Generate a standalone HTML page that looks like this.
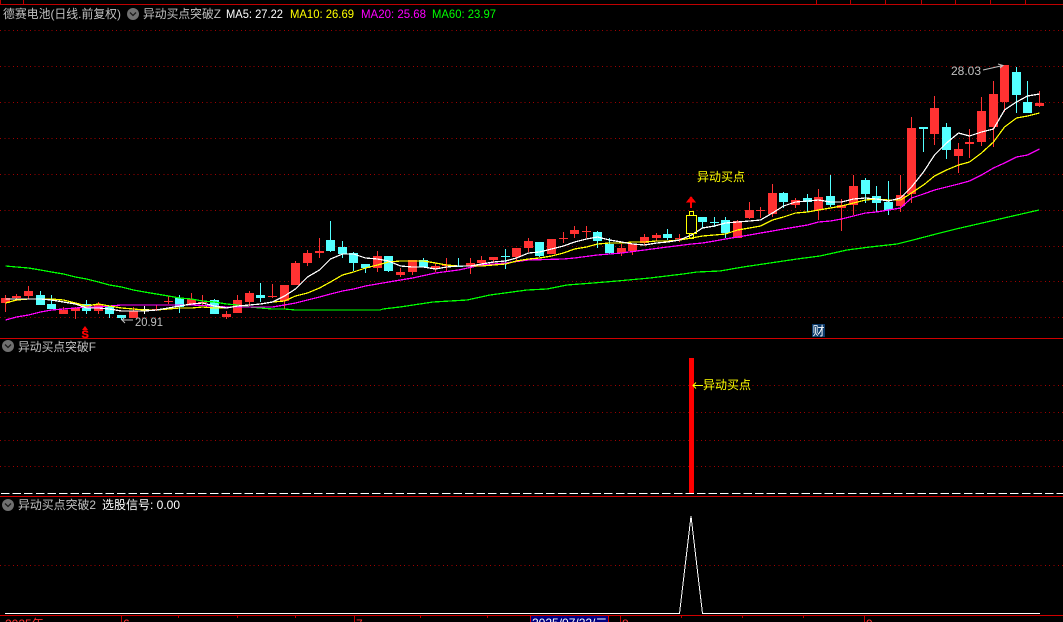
<!DOCTYPE html>
<html><head><meta charset="utf-8"><style>
html,body{margin:0;padding:0;background:#000;width:1063px;height:622px;overflow:hidden}
svg{display:block;position:absolute;left:0;top:0}
text{font:12px "Liberation Sans","WenQuanYi Zen Hei","Noto Sans CJK SC",sans-serif;white-space:pre}
.c{shape-rendering:crispEdges;fill:none}
.m{stroke-width:1.25}
</style></head><body>
<svg width="1063" height="622" viewBox="0 0 1063 622">
<!-- grid -->
<path class="c" stroke="#a00000" stroke-dasharray="1 3.3" d="M0 30.5H1063M0 66.5H1063M0 102.5H1063M0 138.5H1063M0 174.5H1063M0 210.5H1063M0 246.5H1063M0 281.5H1063M0 317.5H1063M0 385.5H1063M0 412.5H1063M0 440.5H1063M0 466.5H1063M0 565.5H1063"/>
<!-- frame -->
<path class="c" stroke="#c00000" d="M0 4.5H1063M0.5 0V4M23.5 0V4M816.5 0V4M850.5 0V4M885.5 0V4M921.5 0V4M955.5 0V4M990.5 0V4M1025.5 0V4M121.5 615V622M178.5 615V618M237.5 615V618M295.5 615V618M354.5 615V622M420.5 615V618M487.5 615V618M620.5 615V622M681.5 615V618M742.5 615V618M803.5 615V618M864.5 615V622"/>
<path class="c" stroke="#d00000" stroke-width="1" d="M0 338.5H1063M0 496.5H1063M0 615.5H1063"/>
<!-- candle wicks -->
<path class="c" stroke="#ff3232" d="M5.5 295V312M16.5 294V301M28.5 286V299M63.5 307V314M75.5 307V319M98.5 302V314M133.5 307V318M156.5 305V311M168.5 296V304M191.5 293V305M202.5 295V306M226.5 311V319M237.5 295V313M249.5 291V306M272.5 284V298M284.5 285V309M295.5 261V285M307.5 250V266M319.5 238V258M377.5 251V272M400.5 268V277M412.5 260V275M435.5 263V272M446.5 258V272M470.5 258V274M481.5 256V266M493.5 257V263M516.5 248V261M528.5 238V252M551.5 239V254M563.5 232V243M574.5 226V238M586.5 226V238M621.5 244V256M632.5 244V255M644.5 234V245M656.5 233V241M679.5 234V242M737.5 220V238M749.5 202V219M760.5 207V218M772.5 184V217M795.5 198V208M818.5 189V220M841.5 199V231M853.5 175V215M900.5 175V212M911.5 117V203M934.5 96V145M958.5 143V173M969.5 129V158M981.5 97V146M993.5 81V147M1004.5 65V112M1039.5 91V107"/>
<path class="c" stroke="#54ffff" d="M40.5 291V305M51.5 295V309M86.5 300V314M109.5 306V318M121.5 315V320M179.5 295V313M214.5 299V314M260.5 283V302M330.5 221V252M342.5 241V258M353.5 252V271M365.5 264V273M388.5 256V272M423.5 258V267M458.5 258V267M505.5 249V269M539.5 242V257M597.5 231V248M609.5 238V254M667.5 229V240M702.5 217V228M714.5 217V227M725.5 217V238M783.5 192V208M807.5 194V212M830.5 175V207M865.5 178V203M876.5 186V212M888.5 181V215M923.5 127V152M946.5 123V159M1016.5 67V113M1027.5 81V113"/>
<!-- candle bodies -->
<path shape-rendering="crispEdges" fill="#ff3232" d="M1 298h9v5h-9zM12 296h9v2h-9zM24 291h9v5h-9zM59 310h9v4h-9zM71 308h9v3h-9zM94 304h9v7h-9zM129 311h9v7h-9zM152 309h9v1h-9zM164 301h9v1h-9zM187 299h9v5h-9zM198 302h9v1h-9zM222 314h9v3h-9zM233 300h9v13h-9zM245 293h9v9h-9zM268 296h9v1h-9zM280 285h9v16h-9zM291 263h9v22h-9zM303 253h9v10h-9zM315 251h9v2h-9zM373 256h9v12h-9zM396 272h9v3h-9zM408 260h9v12h-9zM431 266h9v3h-9zM442 265h9v1h-9zM466 263h9v3h-9zM477 260h9v3h-9zM489 257h9v3h-9zM512 248h9v9h-9zM524 241h9v7h-9zM547 239h9v15h-9zM559 238h9v1h-9zM570 230h9v4h-9zM582 231h9v1h-9zM617 248h9v5h-9zM628 244h9v7h-9zM640 237h9v6h-9zM652 235h9v3h-9zM675 238h9v1h-9zM733 221h9v17h-9zM745 210h9v8h-9zM756 210h9v1h-9zM768 193h9v21h-9zM791 200h9v5h-9zM814 197h9v13h-9zM837 205h9v3h-9zM849 186h9v19h-9zM896 195h9v11h-9zM907 128h9v66h-9zM930 108h9v26h-9zM954 149h9v7h-9zM965 142h9v2h-9zM977 111h9v31h-9zM989 94h9v33h-9zM1000 65h9v37h-9zM1035 103h9v3h-9z"/>
<path shape-rendering="crispEdges" fill="#54ffff" d="M36 295h9v10h-9zM47 304h9v5h-9zM82 304h9v7h-9zM105 306h9v8h-9zM117 315h9v3h-9zM175 298h9v9h-9zM210 300h9v14h-9zM256 295h9v3h-9zM326 240h9v11h-9zM338 247h9v7h-9zM349 253h9v10h-9zM361 264h9v4h-9zM384 256h9v15h-9zM419 260h9v7h-9zM454 266h9v1h-9zM501 256h9v1h-9zM535 242h9v14h-9zM593 232h9v9h-9zM605 244h9v9h-9zM663 234h9v4h-9zM698 217h9v5h-9zM710 222h9v1h-9zM721 220h9v13h-9zM779 193h9v9h-9zM803 198h9v4h-9zM826 196h9v9h-9zM861 180h9v14h-9zM872 196h9v7h-9zM884 202h9v8h-9zM919 127h9v2h-9zM942 127h9v23h-9zM1012 72h9v23h-9zM1023 102h9v11h-9z"/>
<path class="c" stroke="#fff" d="M144.5 306V314M140 309.5H149"/>
<!-- MA60 -->
<polyline class="c m" stroke="#00ff00" points="5.5,266 16.5,267 28.5,268 40.5,270 51.5,272 63.5,274 75.5,277 86.5,279 98.5,282 109.5,285 121.5,287 133.5,290 144.5,292 156.5,294 168.5,296 179.5,298 191.5,299 202.5,301 214.5,302 226.5,304 237.5,305 249.5,307 260.5,308 272.5,309 284.5,309 295.5,310 380,310 383,309 400,307 433,302 467,300 490,295 527,290 547,289 567,285 593,283 617,281 650,278 683,274 697,272 720,271 743,267 770,263 797,259 820,256 847,250 870,247 897,244 913,240 940,233 956,229 1039,210"/>
<!-- MA20 -->
<polyline class="c m" stroke="#ff00ff" points="5.5,320 16.5,317 28.5,315 40.5,312 51.5,310 63.5,309 75.5,308 86.5,307 98.5,307 109.5,306 121.5,305 133.5,305 168.5,305 179.5,305 191.5,305 214.5,306 226.5,307 237.5,307 260.5,307 272.5,307 284.5,305 295.5,303 307.5,300 319.5,297 330.5,294 342.5,291 353.5,289 365.5,286 388.5,282 412.5,278 435.5,273 458.5,270 481.5,265 505.5,263 528.5,260 563.5,259 574.5,258 597.5,255 621.5,253 644.5,250 667.5,247 691.5,244 702.5,243 714.5,241 725.5,239 737.5,237 749.5,235 760.5,233 772.5,231 783.5,229 795.5,227 807.5,225 818.5,222 830.5,221 841.5,219 853.5,216 865.5,213 876.5,212 888.5,210 900.5,208 911.5,198 923.5,194 934.5,190 946.5,187 958.5,184 969.5,181 981.5,175 993.5,168 1004.5,163 1016.5,157 1027.5,155 1039.5,149"/>
<!-- MA10 -->
<polyline class="c m" stroke="#ffff00" points="5.5,303 16.5,300 28.5,299 40.5,299 51.5,299 63.5,300 75.5,303 86.5,306 98.5,304 109.5,306 121.5,308 133.5,309 144.5,310 156.5,310 168.5,309 179.5,308 191.5,308 202.5,307 214.5,308 226.5,308 237.5,306 249.5,305 260.5,304 272.5,302 284.5,301 295.5,296 307.5,293 319.5,288 330.5,282 342.5,275 353.5,272 365.5,268 377.5,265 388.5,262 400.5,261 412.5,261 423.5,261 435.5,263 446.5,265 458.5,266 470.5,266 481.5,266 493.5,265 505.5,264 516.5,261 528.5,259 539.5,258 551.5,256 563.5,253 574.5,249 586.5,247 597.5,244 609.5,243 621.5,243 632.5,242 644.5,242 656.5,241 667.5,241 679.5,240 691.5,238 702.5,236 714.5,235 725.5,234 737.5,230 749.5,228 760.5,226 772.5,220 783.5,217 795.5,213 807.5,212 818.5,210 830.5,208 841.5,206 853.5,203 865.5,200 876.5,199 888.5,200 900.5,200 911.5,193 923.5,185 934.5,176 946.5,170 958.5,165 969.5,162 981.5,153 993.5,142 1004.5,127 1016.5,118 1027.5,116 1039.5,113"/>
<!-- MA5 -->
<polyline class="c m" stroke="#ffffff" points="5.5,299 16.5,299 28.5,299 40.5,299 51.5,300 63.5,302 75.5,304 86.5,308 98.5,308 109.5,309 121.5,311 133.5,311 144.5,311 156.5,310 168.5,308 179.5,306 191.5,304 202.5,303 214.5,306 226.5,308 237.5,306 249.5,305 260.5,304 272.5,302 284.5,296 295.5,289 307.5,277 319.5,270 330.5,259 342.5,254 353.5,254 365.5,258 377.5,259 388.5,261 400.5,266 412.5,267 423.5,267 435.5,269 446.5,267 458.5,266 470.5,266 481.5,264 493.5,262 505.5,261 516.5,258 528.5,253 539.5,252 551.5,249 563.5,246 574.5,242 586.5,239 597.5,237 609.5,240 621.5,242 632.5,244 644.5,245 656.5,243 667.5,242 679.5,240 691.5,235 702.5,228 714.5,226 725.5,223 737.5,222 749.5,221 760.5,220 772.5,213 783.5,206 795.5,202 807.5,201 818.5,200 830.5,202 841.5,202 853.5,199 865.5,198 876.5,199 888.5,201 900.5,198 911.5,187 923.5,172 934.5,155 946.5,143 958.5,133 969.5,136 981.5,132 993.5,129 1004.5,110 1016.5,102 1027.5,96 1039.5,94"/>
<!-- signal candle -->
<path class="c" stroke="#ffff00" d="M686.5 215.5H696.5V233.5H686.5ZM689.5 211.5H693.5V215.5H689.5ZM689.5 233.5H693.5V238.5H689.5Z"/>
<path fill="#ff0000" shape-rendering="crispEdges" d="M691 196L696 202.500H692V208H690V202.500H686Z"/>
<!-- header text -->
<text x="3" y="18" fill="#c0c0c0" textLength="118" lengthAdjust="spacingAndGlyphs">德赛电池(日线.前复权)</text>
<g transform="translate(133,14)"><circle r="6" fill="#707070"/><path d="M-3-1.500L0 1.500L3-1.500" fill="none" stroke="#1c1c1c" stroke-width="1.300"/></g>
<text x="143" y="18" fill="#c0c0c0" textLength="78" lengthAdjust="spacingAndGlyphs">异动买点突破Z</text>
<text x="226" y="18" fill="#ffffff" textLength="57" lengthAdjust="spacingAndGlyphs">MA5: 27.22</text>
<text x="290" y="18" fill="#ffff00" textLength="64" lengthAdjust="spacingAndGlyphs">MA10: 26.69</text>
<text x="361" y="18" fill="#ff00ff" textLength="65" lengthAdjust="spacingAndGlyphs">MA20: 25.68</text>
<text x="432" y="18" fill="#00ff00" textLength="64" lengthAdjust="spacingAndGlyphs">MA60: 23.97</text>
<!-- annotations -->
<text x="951" y="75" fill="#c0c0c0">28.03</text>
<path fill="none" stroke="#c0c0c0" d="M983 70L1003 65.500M998 64L1003 65.500L1000 68"/>
<text x="135" y="326" fill="#c0c0c0" textLength="28" lengthAdjust="spacingAndGlyphs">20.91</text>
<path fill="none" stroke="#c0c0c0" d="M133 320H122M125 317L122 320L125 323"/>
<text x="697" y="181" fill="#ffff00">异动买点</text>
<rect x="812" y="324" width="13" height="13" fill="#0c3a6a"/>
<text x="812.500" y="335" fill="#ffffff">财</text>
<path fill="#ff0000" d="M85 326L88 330H82Z"/>
<text x="81.500" y="338" fill="#ff0000" stroke="#ff0000" stroke-width="0.400" style="font-size:11px;font-weight:bold">S</text>
<!-- panel 2 -->
<g transform="translate(8,346)"><circle r="6" fill="#707070"/><path d="M-3-1.500L0 1.500L3-1.500" fill="none" stroke="#1c1c1c" stroke-width="1.300"/></g>
<text x="18" y="351" fill="#c0c0c0" textLength="78" lengthAdjust="spacingAndGlyphs">异动买点突破F</text>
<path class="c" stroke="#ffffff" stroke-dasharray="8.500 3.100" d="M1 493.500H1063"/>
<rect x="689" y="358" width="5" height="135" fill="#ff0000"/>
<path fill="none" stroke="#ffff00" d="M703 385.500H693M696 382.500L693 385.500L696 388.500"/>
<text x="703" y="389" fill="#ffff00">异动买点</text>
<!-- panel 3 -->
<g transform="translate(8,505)"><circle r="6" fill="#707070"/><path d="M-3-1.500L0 1.500L3-1.500" fill="none" stroke="#1c1c1c" stroke-width="1.300"/></g>
<text x="18" y="509" fill="#c0c0c0" textLength="78" lengthAdjust="spacingAndGlyphs">异动买点突破2</text>
<text x="102" y="509" fill="#ffffff">选股信号: 0.00</text>
<polyline class="c" stroke="#ffffff" points="5,613.500 679.500,613.500 691,516 702.500,613.500 1040,613.500"/>
<!-- time axis -->
<rect x="531" y="616" width="77" height="6" fill="#000080"/>
<path class="c" stroke="#d00000" d="M530.500 615V622M608.500 615V622"/>
<text x="5" y="628" fill="#ff3232">2025年</text>
<text x="123" y="628" fill="#ff3232">6</text>
<text x="356" y="628" fill="#ff3232">7</text>
<text x="532" y="627" fill="#ffffff">2025/07/22/二</text>
<text x="622" y="628" fill="#ff3232">8</text>
<text x="866" y="628" fill="#ff3232">9</text>
</svg>
</body></html>
